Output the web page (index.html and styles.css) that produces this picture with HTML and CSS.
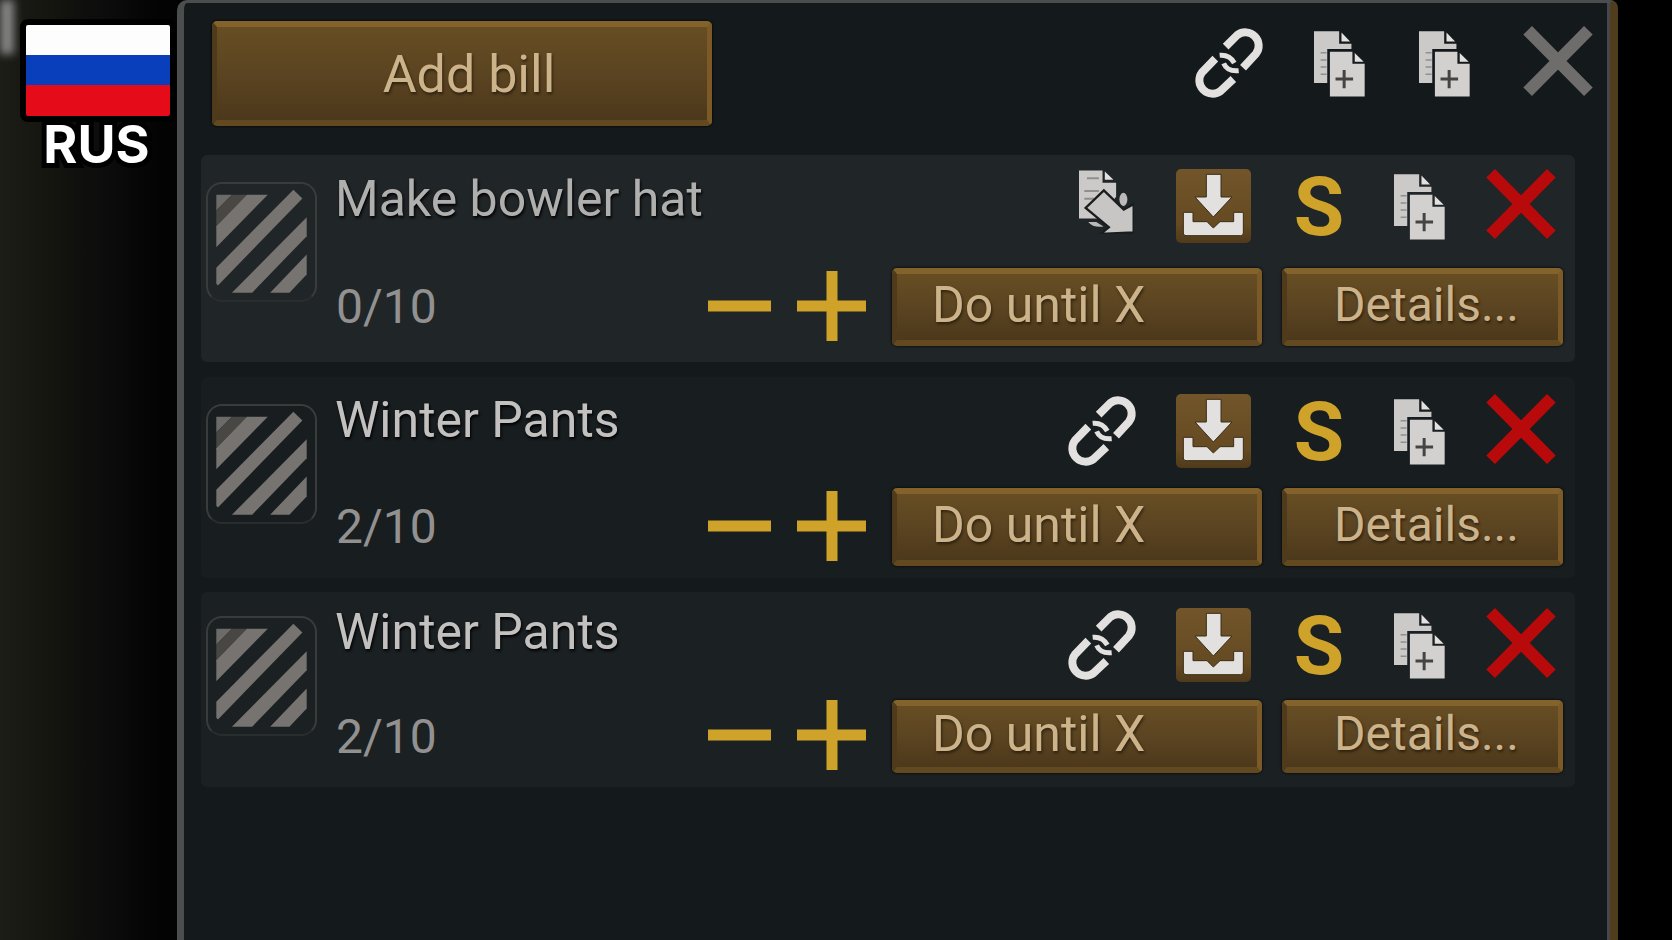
FILE: index.html
```html
<!DOCTYPE html>
<html lang="en">
<head>
  <meta charset="UTF-8">
  <title>Bills</title>
  <link rel="stylesheet" href="styles.css">
</head>
<body>

<!-- Icon shapes -->
<svg class="sprite" aria-hidden="true">
  <symbol id="link" viewBox="0 0 210 216">
    <g fill="none" stroke="#e3e1df" stroke-width="24">
      <path d="M95 59L130 24A40 40 0 0 1 186 80L147 122"/>
      <path d="M64 95L24 136A40 40 0 0 0 80 192L118 156"/>
      <path d="M77 85C98 83 112 92 121 108" stroke-width="15"/>
      <path d="M89 109C96 126 110 133 134 131" stroke-width="15"/>
    </g>
  </symbol>
  <symbol id="copy" viewBox="0 0 154 198">
    <path fill="#cbcac8" d="M0 0H76V38H113V54H40V156H0Z"/>
    <path fill="#e3e1df" d="M83 4V31H109ZM123 66V92H150Z"/>
    <path stroke="#8f8f8f" stroke-width="5" d="M20 65H38M20 87H38M20 108H38M20 130H38"/>
    <path fill="#d2d1cf" d="M48 62H116V98H153V197H48Z"/>
    <path stroke="#444" stroke-width="9" d="M65 144H118M91 117V172"/>
  </symbol>
  <symbol id="paste" viewBox="0 0 166 192">
    <path fill="#cbcac8" d="M0 1H71V38H112V80L60 146H0Z"/>
    <path fill="#e3e1df" d="M78 4V29H104Z"/>
    <path stroke="#8f8f8f" stroke-width="6" d="M24 24H60M16 63H60M16 86H46"/>
    <path fill="#bcbab8" d="M28 156H52L74 170Q42 174 28 156Z"/>
    <ellipse cx="134" cy="88" rx="12" ry="20" fill="#bcbab8"/>
    <path fill="#c8c6c4" stroke="#1a1d1f" stroke-width="7" d="M75 61L135 119L165 102V188L66 192L90 172L20 114Z"/>
  </symbol>
  <symbol id="store" viewBox="0 0 225 222">
    <g fill="#e3e1df" stroke="#3b2c15" stroke-width="3">
      <path d="M91 16H135V84H168L112 144L57 84H91Z"/>
      <path d="M22 130H51V158H93L112 177L132 158H173V130H202V192Q202 200 194 200H30Q22 200 22 192Z"/>
    </g>
  </symbol>
  <symbol id="cross" viewBox="0 0 210 212">
    <path stroke="currentColor" stroke-width="37" d="M13 13L197 199M197 13L13 199"/>
  </symbol>
  <symbol id="minus" viewBox="0 0 63 70">
    <path stroke="currentColor" stroke-width="11" d="M0 35H63"/>
  </symbol>
  <symbol id="plus" viewBox="0 0 69 70">
    <path stroke="currentColor" stroke-width="11" d="M0 35H69M35 0V70"/>
  </symbol>
  <symbol id="hatch" viewBox="0 0 332 361">
    <path fill="#6d6b69" d="M30 38H77L30 86Z"/>
    <path fill="#484744" d="M77 38H122L30 133V86Z"/>
    <path fill="#767370" d="M122 38H185L30 196V133Z"/>
    <path fill="#767370" d="M262 23L289 50L35 311L30 306V258Z"/>
    <path fill="#767370" d="M302 106V163L138 333H77Z"/>
    <path fill="#767370" d="M302 218V278L250 333H192Z"/>
  </symbol>
</svg>

<aside class="language">
  <div class="flag"></div>
  <div class="code">RUS</div>
</aside>

<main class="panel">
  <header class="header">
    <button class="btn add">Add bill</button>
    <div class="header-tools">
      <button class="icon" aria-label="Paste linked"><svg class="i-link"><use href="#link"/></svg></button>
      <button class="icon" aria-label="Copy all"><svg class="i-copy"><use href="#copy"/></svg></button>
      <button class="icon" aria-label="Paste all"><svg class="i-copy"><use href="#copy"/></svg></button>
      <button class="icon close" aria-label="Close"><svg class="i-cross"><use href="#cross"/></svg></button>
    </div>
  </header>

  <section class="bills">
    <!-- Bowler hat -->
    <article class="bill first">
      <div class="thumb"><svg><use href="#hatch"/></svg></div>
      <div class="info">
        <div class="line">
          <h2>Make bowler hat</h2>
          <div class="tools">
            <button class="icon" aria-label="Paste"><svg class="i-paste"><use href="#paste"/></svg></button>
            <button class="icon store" aria-label="Store"><svg class="i-store"><use href="#store"/></svg></button>
            <button class="icon suspend" aria-label="Suspend">S</button>
            <button class="icon" aria-label="Copy"><svg class="i-copy"><use href="#copy"/></svg></button>
            <button class="icon delete" aria-label="Delete"><svg class="i-cross"><use href="#cross"/></svg></button>
          </div>
        </div>
        <div class="line controls">
          <span class="count">0/10</span>
          <button class="icon step" aria-label="Less"><svg class="i-minus"><use href="#minus"/></svg></button>
          <button class="icon step" aria-label="More"><svg class="i-plus"><use href="#plus"/></svg></button>
          <button class="btn mode">Do until X</button>
          <button class="btn details">Details...</button>
        </div>
      </div>
    </article>

    <!-- Winter pants -->
    <article class="bill second">
      <div class="thumb"><svg><use href="#hatch"/></svg></div>
      <div class="info">
        <div class="line">
          <h2>Winter Pants</h2>
          <div class="tools">
            <button class="icon" aria-label="Linked"><svg class="i-link"><use href="#link"/></svg></button>
            <button class="icon store" aria-label="Store"><svg class="i-store"><use href="#store"/></svg></button>
            <button class="icon suspend" aria-label="Suspend">S</button>
            <button class="icon" aria-label="Copy"><svg class="i-copy"><use href="#copy"/></svg></button>
            <button class="icon delete" aria-label="Delete"><svg class="i-cross"><use href="#cross"/></svg></button>
          </div>
        </div>
        <div class="line controls">
          <span class="count">2/10</span>
          <button class="icon step" aria-label="Less"><svg class="i-minus"><use href="#minus"/></svg></button>
          <button class="icon step" aria-label="More"><svg class="i-plus"><use href="#plus"/></svg></button>
          <button class="btn mode">Do until X</button>
          <button class="btn details">Details...</button>
        </div>
      </div>
    </article>

    <!-- Winter pants, second bill -->
    <article class="bill third">
      <div class="thumb"><svg><use href="#hatch"/></svg></div>
      <div class="info">
        <div class="line">
          <h2>Winter Pants</h2>
          <div class="tools">
            <button class="icon" aria-label="Linked"><svg class="i-link"><use href="#link"/></svg></button>
            <button class="icon store" aria-label="Store"><svg class="i-store"><use href="#store"/></svg></button>
            <button class="icon suspend" aria-label="Suspend">S</button>
            <button class="icon" aria-label="Copy"><svg class="i-copy"><use href="#copy"/></svg></button>
            <button class="icon delete" aria-label="Delete"><svg class="i-cross"><use href="#cross"/></svg></button>
          </div>
        </div>
        <div class="line controls">
          <span class="count">2/10</span>
          <button class="icon step" aria-label="Less"><svg class="i-minus"><use href="#minus"/></svg></button>
          <button class="icon step" aria-label="More"><svg class="i-plus"><use href="#plus"/></svg></button>
          <button class="btn mode">Do until X</button>
          <button class="btn details">Details...</button>
        </div>
      </div>
    </article>
  </section>
</main>

</body>
</html>
```
FILE: styles.css
```css
* {
  box-sizing: border-box;
}
body {
  margin: 0;
  min-height: 100vh;
  display: flex;
  padding-right: 54px;
  background: #000;
  font-family: Roboto, "Liberation Sans", sans-serif;
  font-size: 48px;
  line-height: 52px;
}
button {
  margin: 0;
  padding: 0;
  border: none;
  background: none;
  font: inherit;
  color: inherit;
  cursor: pointer;
}
svg {
  display: block;
}
.sprite {
  position: absolute;
  width: 0;
  height: 0;
}

/* Language badge */
.language {
  position: relative;
  width: 177px;
  flex-shrink: 0;
  padding-top: 19px;
  background: linear-gradient(90deg, #1d1d18 0, #14150f 50px, #0c0d0c 100px, #030303 160px);
}
.language::before {
  content: "";
  position: absolute;
  left: 0;
  top: 0;
  width: 14px;
  height: 54px;
  background: #858585;
  filter: blur(4px);
}
.flag {
  position: relative;
  width: 156px;
  height: 103px;
  margin-left: 20px;
  border: 6px solid #000;
  border-radius: 8px;
  background: linear-gradient(#fdfdfd 33%, #0a3fbc 33%, #0a3fbc 66%, #e50b18 66%);
}
.code {
  margin-left: 16px;
  color: #fff;
  font-family: Inter, sans-serif;
  font-size: 52px;
  font-weight: 700;
  text-align: center;
  line-height: 46px;
  -webkit-text-stroke: 10px #000;
  stroke-linejoin: round;
  paint-order: stroke fill;
}

/* Panel */
.panel {
  flex: 1;
  border: solid #4c4e4e;
  border-width: 3px 8px 0 7px;
  border-right-color: #4f3d1e;
  border-radius: 10px 8px 0 0;
  background: #14191c;
  box-shadow: inset -3px 0 #45484a;
}
.header {
  display: flex;
  justify-content: space-between;
  align-items: flex-start;
  padding: 18px 17px 0 28px;
}
.header-tools {
  display: grid;
  grid-template-columns: 110px 110px 100px 99px;
  height: 84px;
}
.header-tools .close {
  justify-content: flex-end;
  color: #6e6d6c;
}

/* Buttons */
.btn {
  border: solid;
  border-width: 6px 5px;
  border-color: #84622c #7b5a28 #63491f #4f3b1b;
  border-radius: 5px;
  padding-bottom: 5px;
  background: linear-gradient(#664d23, #5b4421 50%, #4c381b);
  box-shadow: 0 0 3px #000;
  color: #cdb38a;
  text-shadow: 1px 2px 3px rgba(0,0,0,0.5);
}
.add {
  width: 500px;
  height: 105px;
  padding: 2px 0 0 14px;
  font-size: 52px;
}
.icon {
  display: flex;
  align-items: center;
  justify-content: center;
}
.i-link {
  width: 70px;
  height: 72px;
}
.i-copy {
  width: 51px;
  height: 66px;
  margin-top: 2px;
}
.i-paste {
  width: 55px;
  height: 64px;
  margin: 0 0 8px 8px;
}
.i-store {
  width: 75px;
  height: 74px;
  border-radius: 5px;
  background: linear-gradient(#72552a, #654a22 75%, #4f3a1b);
}
.i-cross {
  width: 70px;
  height: 70px;
  margin-bottom: 4px;
}
.i-minus {
  width: 63px;
  height: 70px;
}
.i-plus {
  width: 69px;
  height: 70px;
}

/* Bills */
.bills {
  padding: 29px 35px 0 17px;
}
.bill {
  display: flex;
  padding: 0 2px 0 5px;
  border-radius: 6px;
}
.thumb {
  width: 111px;
  height: 120px;
  margin-right: 18px;
  border: 2px solid #3a3c3b;
  border-bottom-color: #292d2e;
  border-radius: 16px;
  flex-shrink: 0;
}
.thumb svg {
  width: 111px;
  height: 120px;
  margin: -2px;
}
.info {
  flex: 1;
  display: flex;
  flex-direction: column;
  justify-content: space-between;
}
.line {
  display: flex;
  justify-content: space-between;
}
h2 {
  margin: 0;
  font-size: 50px;
  font-weight: 400;
  color: #c2c1c0;
  text-shadow: 1px 2px 3px #000;
}
.tools {
  display: grid;
  grid-template-columns: 112px 111px 100px 100px 104px;
  height: 74px;
}
.suspend {
  padding-top: 2px;
  color: #cfa32a;
  font-size: 82px;
  font-weight: 700;
}
.delete {
  color: #b90a0b;
}
.controls {
  height: 78px;
  align-items: stretch;
  padding-right: 10px;
}
.count {
  align-self: center;
  margin-right: auto;
  padding-left: 1px;
  color: #929190;
}
.step {
  margin-right: 26px;
  padding-bottom: 3px;
  color: #cfa32a;
}
.mode {
  width: 370px;
  margin-right: 20px;
  padding-left: 35px;
  font-size: 50px;
  text-align: left;
}
.details {
  width: 281px;
  padding-left: 8px;
}

.first {
  height: 207px;
  margin-bottom: 15px;
  padding-top: 14px;
  padding-bottom: 16px;
  background: #202528;
}
.first .thumb {
  margin-top: 13px;
}
.first h2 {
  padding-top: 4px;
  color: #afafae;
}
.second {
  height: 201px;
  margin-bottom: 14px;
  padding-top: 17px;
  padding-bottom: 12px;
  background: #181d20;
}
.second .thumb {
  margin-top: 10px;
}
.third {
  height: 195px;
  padding-top: 14px;
  padding-bottom: 14px;
  background: #1b2023;
}
.third .thumb {
  margin-top: 10px;
}
.third .tools {
  margin-top: 2px;
}
.third .controls {
  height: 73px;
}
```
